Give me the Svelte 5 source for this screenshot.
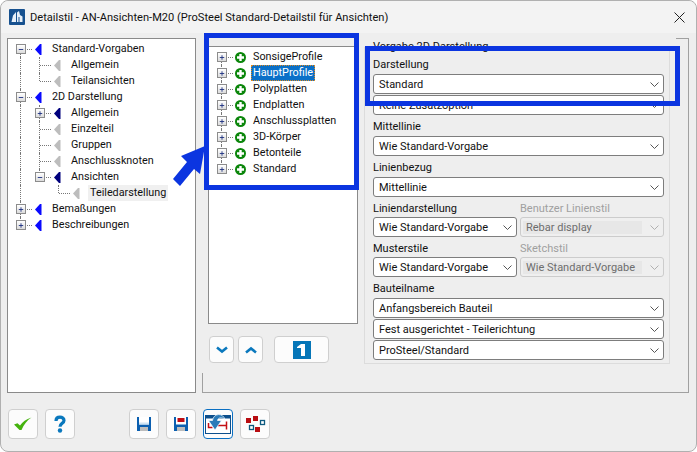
<script>
  // left tree: g = guide per indent level (full, tee, elbow, first), exp = expander, tone = arrow colour
  const navTree = [
    { label: 'Standard-Vorgaben', g: ['first'], exp: '-', tone: 'blue' },
    { label: 'Allgemein', g: ['full', 'tee'], tone: 'grey' },
    { label: 'Teilansichten', g: ['full', 'elbow'], tone: 'grey' },
    { label: '2D Darstellung', g: ['tee'], exp: '-', tone: 'blue' },
    { label: 'Allgemein', g: ['full', 'tee'], exp: '+', tone: 'navy' },
    { label: 'Einzelteil', g: ['full', 'tee'], tone: 'grey' },
    { label: 'Gruppen', g: ['full', 'tee'], tone: 'grey' },
    { label: 'Anschlussknoten', g: ['full', 'tee'], tone: 'grey' },
    { label: 'Ansichten', g: ['full', 'elbow'], exp: '-', tone: 'navy' },
    { label: 'Teiledarstellung', g: ['full', 'none', 'elbow'], tone: 'grey', current: true },
    { label: 'Bemaßungen', g: ['tee'], exp: '+', tone: 'blue' },
    { label: 'Beschreibungen', g: ['elbow'], exp: '+', tone: 'blue' }
  ];

  const profiles = ['SonsigeProfile', 'HauptProfile', 'Polyplatten', 'Endplatten', 'Anschlussplatten', '3D-Körper', 'Betonteile', 'Standard'];
  const selectedProfile = 'HauptProfile';

  function guideFor(i, total) {
    if (i === 0) return 'first';
    return i === total - 1 ? 'elbow' : 'tee';
  }
</script>

{#snippet expander(kind)}
  <span class="exp">
    <svg width="9" height="9" viewBox="0 0 9 9">
      <path d="M2 4.5h5" stroke="#1c2f80" />
      {#if kind === '+'}<path d="M4.5 2v5" stroke="#1c2f80" />{/if}
    </svg>
  </span>
{/snippet}

{#snippet guide(type, kind)}
  <span class="cell {type}">
    {#if kind}{@render expander(kind)}{/if}
  </span>
{/snippet}

{#snippet chevron()}
  <svg class="chev" width="9" height="5" viewBox="0 0 9 5"><path d="M.5.5l4 4 4-4" fill="none" stroke="currentColor" /></svg>
{/snippet}

{#snippet dropdown(text, disabled = false)}
  <div class="select" class:disabled>
    <span class="value">{text}</span>
    {@render chevron()}
  </div>
{/snippet}

{#snippet floppy(marked)}
  <svg width="14" height="14" viewBox="0 0 14 14">
    <rect width="14" height="14" fill="#0b5fb0" />
    <rect x="2" y="0" width="10" height="7.500" fill="#fff" />
    {#if marked}
      <rect x="3.500" y="1" width="7" height="4" fill="#c00c14" />
    {:else}
      <rect x="2" y="5.500" width="10" height="2" fill="#cfe4f4" />
    {/if}
    <rect x="3" y="10" width="8" height="4" fill="#bdbdbd" />
  </svg>
{/snippet}

<div class="page">
  <div class="window">
    <header class="title">
      <svg class="logo" width="16" height="16" viewBox="0 0 16 16">
        <rect width="16" height="16" rx="1" fill="#17518f" />
        <path d="M2.500 13L4 6.500 7 3v10zM8 13V3.500L10 2l1 4 2.500 1.500V13z" fill="#e8f0f8" />
        <path d="M9.500 13V8h1v5z" fill="#17518f" />
      </svg>
      <span class="title-text">Detailstil - AN-Ansichten-M20 (ProSteel Standard-Detailstil für Ansichten)</span>
      <svg class="close" width="11" height="11" viewBox="0 0 11 11"><path d="M.5.5l10 10M10.500.5l-10 10" stroke="#222" stroke-width="1" /></svg>
    </header>

    <div class="body">
      <nav class="tree nav-tree">
        {#each navTree as item}
          <div class="row">
            {#each item.g as type, level}
              {@render guide(type, level === item.g.length - 1 ? item.exp : null)}
            {/each}
            <svg class="tri" width="8" height="11" viewBox="0 0 8 11">
              <path d="M1 5.500L6 0h1.500v11H6z" class={item.tone} />
            </svg>
            <span class="label" class:current={item.current}>{item.label}</span>
          </div>
        {/each}
      </nav>

      <section class="frame">
        <div class="pane">
          <div class="mid">
            <div class="tree profile-tree">
              {#each profiles as name, i}
                <div class="row">
                  {@render guide(guideFor(i, profiles.length), '+')}
                  <svg class="plus" width="11" height="11" viewBox="0 0 11 11">
                    <circle cx="5.500" cy="5.500" r="5.500" fill="#0b860b" />
                    <path d="M5.500 2v7M2 5.500h7" stroke="#fff" stroke-width="2.400" />
                  </svg>
                  <span class="label" class:picked={name === selectedProfile}>{name}</span>
                </div>
              {/each}
            </div>
            <div class="mid-buttons">
              <button class="btn small" aria-label="Nach unten">
                <svg width="12" height="8" viewBox="0 0 12 8"><path d="M1 1.500l5 4 5-4" fill="none" stroke="#0a78bd" stroke-width="2.600" /></svg>
              </button>
              <button class="btn small" aria-label="Nach oben">
                <svg width="12" height="8" viewBox="0 0 12 8"><path d="M1 6.500l5-4 5 4" fill="none" stroke="#0a78bd" stroke-width="2.600" /></svg>
              </button>
              <button class="btn wide" aria-label="Eins">
                <svg width="18" height="18" viewBox="0 0 18 18">
                  <rect width="18" height="18" fill="#0676b8" />
                  <path d="M4 6l4-3h4v12H8V7H4z" fill="#fff" />
                </svg>
              </button>
            </div>
          </div>

          <div class="group">
            <span class="legend">Vorgabe 2D Darstellung</span>
            <div class="field-label">Darstellung</div>
            <div class="stack">
              {@render dropdown('Standard')}
              {@render dropdown('Keine Zusatzoption')}
            </div>
            <div class="field-label">Mittellinie</div>
            {@render dropdown('Wie Standard-Vorgabe')}
            <div class="field-label">Linienbezug</div>
            {@render dropdown('Mittellinie')}
            <div class="pair">
              <div>
                <div class="field-label tight">Liniendarstellung</div>
                {@render dropdown('Wie Standard-Vorgabe')}
              </div>
              <div>
                <div class="field-label tight off">Benutzer Linienstil</div>
                {@render dropdown('Rebar display', true)}
              </div>
              <div>
                <div class="field-label tight">Musterstile</div>
                {@render dropdown('Wie Standard-Vorgabe')}
              </div>
              <div>
                <div class="field-label tight off">Sketchstil</div>
                {@render dropdown('Wie Standard-Vorgabe', true)}
              </div>
            </div>
            <div class="field-label">Bauteilname</div>
            <div class="stack">
              {@render dropdown('Anfangsbereich Bauteil')}
              {@render dropdown('Fest ausgerichtet - Teilerichtung')}
              {@render dropdown('ProSteel/Standard')}
            </div>
          </div>
        </div>
      </section>
    </div>

    <footer class="toolbar">
      <button class="btn" aria-label="OK">
        <svg width="20" height="16" viewBox="0 0 20 16">
          <path d="M1 8.500l3.500-1.200L7 9.500C9.500 6 13 3 18.500 1.500 14 4 11 8.500 8.500 14H6.500z" fill="#45b30e" />
        </svg>
      </button>
      <button class="btn" aria-label="Hilfe">
        <svg width="14" height="18" viewBox="0 0 14 18">
          <path d="M3 6C3 3.500 4.800 2.200 7 2.200S11 3.500 11 5.500c0 2.800-4 3-4 6.300" fill="none" stroke="#0a78bd" stroke-width="3.200" />
          <circle cx="7" cy="15.500" r="2.200" fill="#0a78bd" />
        </svg>
      </button>
      <span class="spacer"></span>
      <button class="btn" aria-label="Speichern">{@render floppy(false)}</button>
      <button class="btn" aria-label="Speichern unter">{@render floppy(true)}</button>
      <button class="btn focus" aria-label="Zurücksetzen">
        <svg width="26" height="24" viewBox="0 0 26 24">
          <rect x=".5" y="3.500" width="25" height="18" fill="#fff" stroke="#0d4f8c" />
          <rect x=".5" y="3.500" width="25" height="3" fill="#0d4f8c" />
          <path d="M3.500 11v4.500h4M21.500 9.500v8M13 13.500h8.500" fill="none" stroke="#c40f14" stroke-width="1.500" />
          <path d="M20 7.500C18 .5 8.500 1 7.500 8.500H3.500l6.500 9.500 6.500-9.500h-4C13 5.500 17 4.800 20 7.500z" fill="#2a7ab8" stroke="#fff" stroke-width=".7" />
        </svg>
      </button>
      <button class="btn" aria-label="Gruppen">
        <svg width="24" height="20" viewBox="0 0 24 20">
          <rect x="3" y="4" width="5" height="5" fill="#b80d12" />
          <rect x="10" y="2" width="5" height="5" fill="#b80d12" />
          <rect x="12" y="13" width="5" height="5" fill="#b80d12" />
          <rect x="17.500" y="6.500" width="4" height="4" fill="#fff" stroke="#0d5a80" stroke-width="1.300" />
          <rect x="6.500" y="11.500" width="4" height="4" fill="#fff" stroke="#0d5a80" stroke-width="1.300" />
        </svg>
      </button>
    </footer>
  </div>

  <!-- blue annotations drawn on top of the screenshot -->
  <div class="mark mark-tree"></div>
  <div class="mark mark-select"></div>
  <svg class="arrow" width="36" height="44" viewBox="0 0 36 44">
    <path d="M35 1L11 11l6 6L3 34l7 7 14-17 6 5z" fill="#0b35e0" />
  </svg>
</div>

<style>
  :global(body) {
    margin: 0;
    background: #fff;
  }

  .page {
    position: relative;
    width: 697px;
    height: 452px;
    font-family: Roboto, "Liberation Sans", sans-serif;
    font-size: 11px;
    color: #111;
    overflow: hidden;
  }

  .window {
    box-sizing: border-box;
    width: 697px;
    height: 452px;
    border: 1px solid #b0b0b0;
    border-radius: 8px;
    background: #eeeeee;
  }

  .title {
    display: flex;
    align-items: center;
    height: 32px;
    padding: 0 11px 0 8px;
    background: #f3f3f3;
    border-radius: 8px 8px 0 0;
  }

  .logo {
    margin-right: 5px;
  }

  .title-text {
    flex: 1;
    font-size: 11.1px;
  }

  .body {
    display: flex;
    gap: 6px;
    padding: 5px 0 0 6px;
  }

  .tree {
    box-sizing: border-box;
    background: #fff;
    border: 1px solid #8a8a8a;
    font-size: 10.8px;
  }

  .nav-tree {
    width: 189px;
    height: 355px;
    padding: 2px 0 0 8px;
  }

  .row {
    display: flex;
    align-items: center;
    height: 16px;
    line-height: 16px;
    white-space: nowrap;
  }

  .cell {
    position: relative;
    width: 19px;
    height: 16px;
    flex: none;
  }

  .cell.full::before,
  .cell.tee::before,
  .cell.elbow::before,
  .cell.first::before {
    content: "";
    position: absolute;
    left: 4px;
    top: 0;
    bottom: 0;
    border-left: 1px dotted #777;
  }

  .cell.elbow::before {
    bottom: 8px;
  }

  .cell.first::before {
    top: 8px;
  }

  .cell.tee::after,
  .cell.elbow::after,
  .cell.first::after {
    content: "";
    position: absolute;
    left: 5px;
    top: 8px;
    width: 11px;
    border-top: 1px dotted #777;
  }

  .exp {
    position: absolute;
    z-index: 1;
    left: 0;
    top: 3px;
    box-sizing: border-box;
    width: 10px;
    height: 10px;
    display: flex;
    border: 1px solid #8c8c8c;
    background: linear-gradient(#fff, #dcdcdc);
  }

  .exp svg {
    display: block;
  }

  .tri {
    flex: none;
    margin-left: -1px;
  }

  .tri .blue {
    fill: #0a0aff;
  }

  .tri .navy {
    fill: #00007d;
  }

  .tri .grey {
    fill: #bdbdbd;
  }

  .label {
    margin-left: 8px;
    padding: 0 2px;
  }

  .label.current {
    background: #f0f0f0;
  }

  .frame {
    box-sizing: border-box;
    width: 487px;
    height: 355px;
    border: 1px solid #a0a0a0;
  }

  .pane {
    display: flex;
    gap: 6px;
    box-sizing: border-box;
    width: 474px;
    height: 335px;
    margin: -1px 0 0 -1px;
    padding-left: 6px;
    background: #eeeeee;
  }

  .mid {
    width: 150px;
    flex: none;
    padding-top: 8px;
  }

  .profile-tree {
    height: 278px;
    padding: 2px 0 0 8px;
  }

  .profile-tree .plus {
    margin-left: -1px;
    flex: none;
  }

  .profile-tree .label {
    margin-left: 5px;
  }

  .label.picked {
    background: #0a70c8;
    color: #fff;
    outline: 1px dotted #e08a20;
    outline-offset: -1px;
  }

  .mid-buttons {
    display: flex;
    gap: 4px;
    margin-top: 12px;
    padding-left: 1px;
  }

  .btn {
    box-sizing: border-box;
    display: flex;
    align-items: center;
    justify-content: center;
    width: 30px;
    height: 30px;
    padding: 0;
    background: #fcfcfc;
    border: 1px solid #cfcfcf;
    border-radius: 4px;
  }

  .btn.small {
    width: 25px;
    height: 27px;
  }

  .btn.wide {
    width: 55px;
    height: 27px;
    margin-left: 7px;
  }

  .btn.focus {
    border-color: #0a6fc2;
  }

  .group {
    position: relative;
    box-sizing: border-box;
    width: 306px;
    height: 317px;
    margin-top: 9px;
    padding: 5px 5px 2px 8px;
    border: 1px solid #dcdcdc;
  }

  .legend {
    position: absolute;
    left: 8px;
    top: -8px;
    background: #eeeeee;
    line-height: 14px;
  }

  .field-label {
    height: 21px;
    line-height: 24px;
  }

  .field-label.tight {
    height: 20px;
    line-height: 23px;
  }

  .field-label.off {
    color: #a0a0a0;
  }

  .stack {
    display: flex;
    flex-direction: column;
    gap: 1px;
  }

  .pair {
    display: grid;
    grid-template-columns: 1fr 1fr;
    column-gap: 3px;
  }

  .select {
    box-sizing: border-box;
    display: flex;
    align-items: center;
    justify-content: space-between;
    height: 20px;
    padding: 0 4px 0 5px;
    background: #fff;
    border: 1px solid #7d7d7d;
    border-radius: 3px;
    color: #111;
  }

  .select .chev {
    color: #555;
  }

  .select.disabled {
    background: #efefef;
    border-color: #cccccc;
    color: #6d6d6d;
  }

  .select.disabled .value {
    flex: 1;
    margin: 0 8px 0 -3px;
    padding-left: 3px;
    background: #e7e7e7;
  }

  .select.disabled .chev {
    color: #b0b0b0;
  }

  .toolbar {
    display: flex;
    gap: 7px;
    padding: 16px 0 0 7px;
  }

  .spacer {
    width: 40px;
  }

  .mark {
    position: absolute;
    box-sizing: border-box;
    border: 5px solid #0b35e0;
  }

  .mark-tree {
    left: 204px;
    top: 33px;
    width: 155px;
    height: 157px;
  }

  .mark-select {
    left: 365px;
    top: 46px;
    width: 315px;
    height: 60px;
  }

  .arrow {
    position: absolute;
    left: 170px;
    top: 145px;
  }
</style>
